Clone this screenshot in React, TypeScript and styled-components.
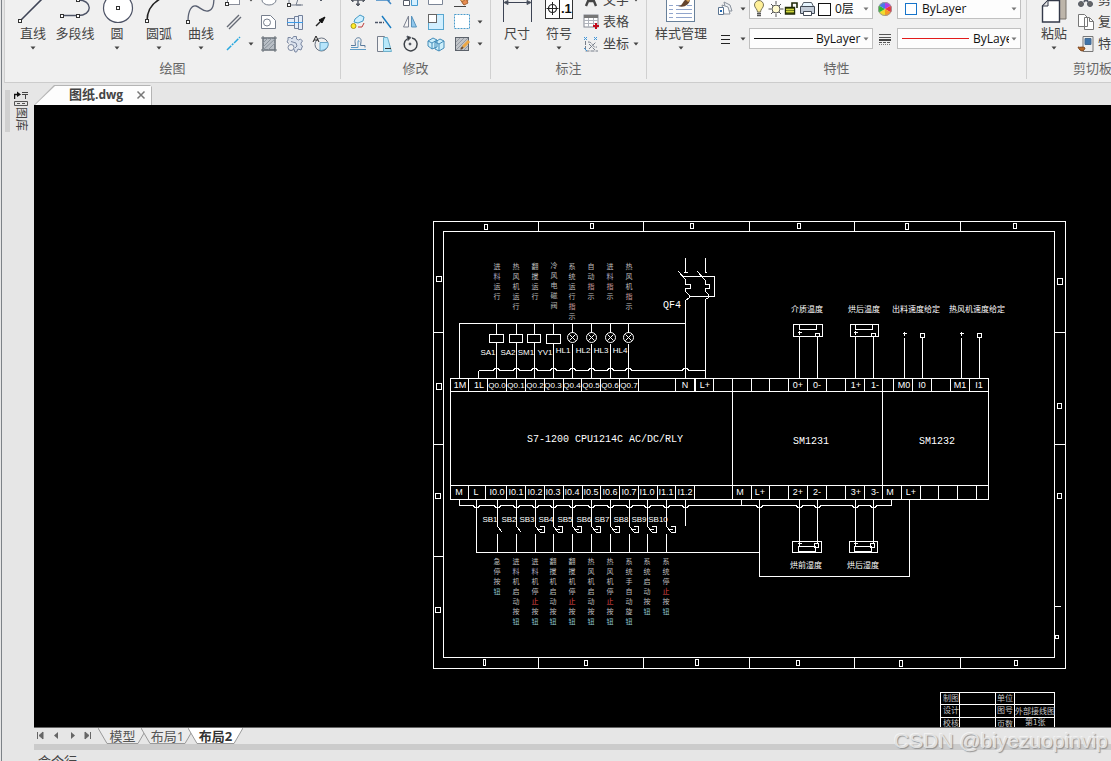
import React from "react";
import styled, { createGlobalStyle, css } from "styled-components";

const ui = `"Open Sans", "Noto Sans CJK SC", sans-serif`;

const GlobalStyle = createGlobalStyle`
  * { box-sizing: border-box; }
  body { margin: 0; background: #e6e6e6; overflow: hidden; }
  button, select { font: inherit; color: inherit; }
`;

const Window = styled.div`
  display: flex;
  flex-direction: column;
  height: 100vh;
  margin-left: 1px;
  border-left: 1px solid #7d8288;
  background: #e6e6e6;
  color: #444;
  font: 13px/16px ${ui};
  overflow: hidden;
`;

/* ---------- ribbon ---------- */

const Ribbon = styled.header`
  display: flex;
  flex: none;
  height: 83px;
  margin-left: 2px;
  background: #f0f0f0;
  border-left: 1px solid #d0d0d0;
  border-bottom: 1px solid #ccc;
  overflow: hidden;
`;

const Panel = styled.section<{ $width: number }>`
  display: flex;
  flex: none;
  flex-direction: column;
  width: ${(p) => p.$width}px;
  height: 79px;
  border-right: 1px solid #d0d0d0;
`;

const PanelBody = styled.div<{ $inset: number }>`
  display: flex;
  height: 60px;
  padding-left: ${(p) => p.$inset}px;
`;

const PanelTitle = styled.h2`
  margin: 0;
  color: #666;
  font-size: 13px;
  font-weight: 400;
  line-height: 16px;
  text-align: center;
`;

const plainButton = css`
  padding: 0;
  border: 0;
  background: none;
`;

const BigButton = styled.button<{ $width?: number }>`
  ${plainButton}
  display: flex;
  flex: none;
  flex-direction: column;
  align-items: center;
  width: ${(p) => p.$width ?? 42}px;
  white-space: nowrap;
  svg { display: block; flex: none; }
  span { height: 21px; line-height: 16px; }
`;

const ToolGrid = styled.div<{ $cols: string }>`
  display: grid;
  flex: none;
  grid-template-columns: ${(p) => p.$cols};
  grid-auto-rows: 22px;
  height: 66px;
  margin-top: -11px;
`;

const Tool = styled.button`
  ${plainButton}
  display: flex;
  align-items: center;
  justify-content: center;
  svg { display: block; flex: none; }
`;

const LabelTool = styled.button`
  ${plainButton}
  display: flex;
  align-items: center;
  gap: 1px;
  white-space: nowrap;
  svg { flex: none; }
  span { padding-bottom: 2px; }
  svg + span + svg { margin-left: 3px; }
`;

const PropertyGrid = styled.div`
  display: grid;
  grid-template-columns: 22px 13px 124px 24px 124px;
  grid-template-rows: 21px 21px;
  row-gap: 9px;
  margin: -2px 0 0 3px;
`;

const Combo = styled.label`
  display: flex;
  align-items: center;
  gap: 2px;
  padding: 0 3px 0 4px;
  border: 1px solid #c0c0c0;
  background: #fdfdfd;
  color: #111;
  font-size: 12px;
  overflow: hidden;
  svg { flex: none; }
`;

const Select = styled.select`
  flex: 1;
  min-width: 0;
  height: 16px;
  padding: 0;
  border: 0;
  background: none;
  appearance: none;
  line-height: 16px;
`;

/* ---------- workspace ---------- */

const Workspace = styled.div`
  display: flex;
  flex: 1;
  min-height: 0;
`;

const SideBar = styled.aside`
  display: flex;
  align-items: flex-start;
  gap: 4px;
  width: 32px;
  padding: 7px 0 0 3px;
`;

const Grip = styled.div`
  width: 5px;
  height: 42px;
  background: #d0d0d0;
`;

const LibraryTab = styled.button`
  ${plainButton}
  display: flex;
  flex-direction: column;
  align-items: center;
  width: 14px;
  span {
    font-size: 12px;
    line-height: 14px;
    writing-mode: vertical-rl;
    text-orientation: sideways;
  }
  svg { display: block; }
`;

const Editor = styled.main`
  display: flex;
  flex: 1;
  flex-direction: column;
  min-width: 0;
`;

const FileTabs = styled.nav`
  flex: none;
  height: 22px;
  padding-top: 2px;
`;

const FileTab = styled.div`
  display: flex;
  align-items: center;
  width: 118px;
  height: 20px;
  background: #b4b4b4;
  clip-path: polygon(0 100%, 20px 0, 116px 0, 118px 2px, 118px 100%);
  position: relative;
  &::before {
    content: "";
    position: absolute;
    inset: 1px 1px 0 1px;
    background: #fdfdfd;
    clip-path: polygon(0 100%, 20px 0, 100% 0, 100% 100%);
  }
`;

const FileName = styled.a`
  position: relative;
  width: 67px;
  margin-left: 35px;
  padding-bottom: 2px;
  color: #444;
  font-size: 13px;
  font-weight: 700;
  line-height: 18px;
  text-decoration: none;
  white-space: nowrap;
  small { font-size: 12px; }
`;

const CloseButton = styled.button`
  ${plainButton}
  position: relative;
  display: flex;
  svg { display: block; }
`;

const Canvas = styled.div`
  flex: 1;
  min-height: 0;
  background: #000;
  border-bottom: 1px solid #666;
  svg { display: block; width: 100%; height: 100%; }
`;

const LayoutBar = styled.nav`
  display: flex;
  flex: none;
  height: 16px;
`;

const NavButton = styled.button`
  ${plainButton}
  display: flex;
  align-items: center;
  width: 16px;
  svg { display: block; }
`;

const LayoutTab = styled.button<{ $width: number; $active?: boolean }>`
  ${plainButton}
  position: relative;
  flex: none;
  width: ${(p) => p.$width}px;
  height: 16px;
  margin-right: -6px;
  font-weight: ${(p) => (p.$active ? 700 : 400)};
  line-height: 12px;
  color: ${(p) => (p.$active ? "#333" : "#555")};
  z-index: ${(p) => (p.$active ? 1 : 0)};
  svg { position: absolute; inset: 0; width: 100%; height: 100%; }
  span { position: relative; }
`;

const Splitter = styled.div`
  flex: none;
  height: 6px;
  background: #cbcbcb;
`;

const CommandPane = styled.div`
  flex: none;
  height: 11px;
  padding: 2px 0 0 4px;
  line-height: 18px;
  overflow: hidden;
`;

const Watermark = styled.div`
  position: absolute;
  right: 3px;
  bottom: 8px;
  color: #e2e2e2;
  font: 21px/24px "Liberation Sans", sans-serif;
  text-shadow: 1px 1px 1px #8a8a8a, -1px -1px 0 #f4f4f4;
  opacity: 0.9;
`;

/* ---------- icons ---------- */

const Caret = ({ color = "#444" }: { color?: string }) => (
  <svg width="6" height="4" viewBox="0 0 6 4"><path d="M.5 .5h5L3 3.5z" fill={color} /></svg>
);

const Icon = ({ children, w = 22, h = 22 }: { children: React.ReactNode; w?: number; h?: number }) => (
  <svg width={w} height={h} viewBox={`0 0 ${w} ${h}`} fill="none" stroke="#555b66" strokeWidth="1">{children}</svg>
);

const node = (x: number, y: number) => (
  <rect x={x - 1.5} y={y - 1.5} width="3" height="3" fill="#fff" stroke="#333" />
);

const bigIcons = {
  line: <Icon w={42} h={25}><path d="M8 21 30-1" stroke="#3f4456" strokeWidth="1.6" />{node(8, 21)}</Icon>,
  poly: <Icon w={42} h={25}><path d="M8 15.500h16c15 0 15-15.500 0-15.500" stroke="#4d5366" strokeWidth="1.4" />{node(8, 16)}{node(24, 16)}{node(24, 0)}</Icon>,
  circle: <Icon w={42} h={25}><circle cx="22" cy="8" r="14.500" fill="#fff" stroke="#4d5366" strokeWidth="1.2" />{node(22, 8)}</Icon>,
  arc: <Icon w={42} h={25}><path d="M9 21C9 11 13 4 22-1" stroke="#222" strokeWidth="1.5" />{node(9, 21)}</Icon>,
  curve: <Icon w={42} h={25}><path d="M8 21C8 10 12 5 16 6S23 12 28 11 34 5 34-4" stroke="#596072" strokeWidth="1.3" />{node(8, 22)}</Icon>,
  dimension: <Icon w={42} h={25}><path d="M7.500 0v22M35.500 0v22M8 2.500h28" stroke="#3d4454" /><path d="M8 2.500l4-2v4zM35 2.500l-4-2v4z" fill="#3d4454" /></Icon>,
  symbol: (
    <Icon w={42} h={25}>
      <rect x="7.500" y="-8" width="27" height="26.500" fill="#fff" stroke="#333" />
      <path d="M21.500-2v20M14.500 2v13M8.500 8.500h12" stroke="#222" />
      <circle cx="14.500" cy="8.500" r="4" stroke="#222" strokeWidth="1.2" />
      <text x="23" y="13" fill="#111" stroke="none" fontSize="13" fontWeight="700" fontFamily="Liberation Sans">.1</text>
    </Icon>
  ),
  style: (
    <Icon w={42} h={25}>
      <rect x="6.500" y="-4" width="28" height="25.500" fill="#fff" stroke="#67809a" />
      <path d="M9 5.500h4M9 9.500h4M9 13.500h4M9 17.500h4M16 5.500h5M27 5.500h5M16 9.500h16M16 13.500h16M16 17.500h16" stroke="#91a5cc" />
      <path d="M18 6c4 0 4-3 7-6h5c-1 5-6 8-12 6z" fill="#65452e" stroke="none" />
      <path d="M27 1 31-3" stroke="#d7a35b" strokeWidth="3" />
    </Icon>
  ),
  paste: (
    <Icon w={42} h={25}>
      <path d="M18-4h15v23H18z" fill="#bdb5aa" stroke="#77716a" />
      <path d="M9.500 6 15 .5h11.500v21.500h-17z" fill="#fff" stroke="#343a4a" strokeWidth="1.4" />
      <path d="M9.500 6H15V0z" fill="#e5e5e5" stroke="#343a4a" />
    </Icon>
  ),
};

const drawIcons = [
  <Icon><rect x="4.500" y="7" width="12" height="8.500" fill="#fff" stroke="#8a8e9a" />{node(4, 15)}</Icon>,
  <Caret />,
  <Icon><ellipse cx="11" cy="11" rx="7" ry="5" fill="#fff" stroke="#777f8d" /></Icon>,
  <Icon><path d="M5 17V7h10l-3 9h7M5 16h12" stroke="#777f8d" />{node(5, 16)}</Icon>,
  <Icon><path d="M9 10h4l-2 2z" fill="#555" /></Icon>,
  <Icon><path d="M4 16 16 4M6 18 18 6" stroke="#666b76" strokeWidth="1.4" /></Icon>,
  <i />,
  <Icon><path d="M3.500 4.500h9l5 5v8h-14z" fill="#fff" stroke="#777f8d" /><circle cx="9" cy="11.500" r="3.500" stroke="#777f8d" /></Icon>,
  <Icon><path d="M3.500 7.500h7v7h-7zM10.500 5.500h4v12h-4zM14.500 4.500h4v14h-4z" fill="#e5edf8" stroke="#72809b" /><path d="M3 11.500h16" stroke="#3d9be8" /></Icon>,
  <Icon><path d="m6 15 5-5" stroke="#222" strokeWidth="1.500" /><path d="m9 9 6-3-3 6z" fill="#111" stroke="#111" /></Icon>,
  <Icon><path d="M4 17 17 4" stroke="#29a8df" strokeWidth="1.5" strokeDasharray="6 1 2 1" /></Icon>,
  <Caret />,
  <Icon><rect x="5" y="5" width="12" height="12" fill="#b8bec5" stroke="#697079" /><path d="M3 5h16M3 17h16M5 3v16M17 3v16" stroke="#687078" /><path d="m5 10 5-5m-5 9 9-9m-9 12L17 6m-7 11 7-7" stroke="#8b949d" /></Icon>,
  <Icon>
    <path d="M4 7V4.500h2.500L8 6l1.500-2.500h3V6l2 1 2-1 2 2-1.500 2v2l1.500 1-1.500 4-3-1-1.500 3H11" fill="#dbe2ed" stroke="#7b88a2" />
    <path d="M4 7 3 9l2 1.500M9 14l2 5M7 8.500l5 1.500 1 3-2 2" stroke="#7b88a2" />
    <circle cx="7" cy="14.500" r="3" fill="#f0f0f0" stroke="#7b88a2" />
  </Icon>,
  <Icon><circle cx="11.500" cy="11.500" r="6.500" stroke="#6b7482" /><path d="M10 9.500h8c1 5-3 8-8 8z" fill="#b7e5fb" stroke="#6ba7c8" /><path d="m3 9 3-6 3 6M4 7h4" stroke="#222" /></Icon>,
];

const modifyIcons = [
  <Icon><path d="M11 5v12M5 11h12" strokeWidth="1.5" /><path d="m9 15 2 2 2-2zM4 11l2-2v4zM18 11l-2-2v4z" fill="#555" /></Icon>,
  <Icon><path d="M3 11h14M10 6l8 9" stroke="#3e86c4" strokeWidth="1.5" /></Icon>,
  <Icon><path d="M4.500 11.500h6v5h-6z" fill="#fff" /><path d="M12.500 9.500h6v7h-6z" fill="#d6f0ff" stroke="#459bd1" /></Icon>,
  <Icon><path d="M3.500 3.500h14v12h-14z" fill="#fff" stroke="#7b8596" /></Icon>,
  <Icon><path d="m6 6 6-2 5 8-4 4z" fill="#efb262" stroke="#a8683a" /><path d="m11 13 4-3 2 4-4 2z" fill="#e98c50" stroke="#a8683a" /><path d="M3 17.500h12" stroke="#444" /></Icon>,
  <i />,
  <Icon><circle cx="6.500" cy="15" r="2.500" fill="#ffec29" stroke="#a99720" /><path d="m8 8 5-4 4 2-1 4-5 2-4-1z" fill="#cdefff" stroke="#459ac5" /><path d="M11 16h4l2-4" stroke="#bd3b39" /></Icon>,
  <Icon><path d="M2 11.500h9" stroke="#4d5668" strokeWidth="1.5" strokeDasharray="3 1" /><path d="m9 5 9 12" stroke="#187bc0" strokeWidth="1.4" /></Icon>,
  <Icon><path d="M9.500 5v11h-5z" fill="#f5f5f5" stroke="#7c8291" /><path d="M12.500 5v11h5z" fill="#92c8ec" stroke="#5793bd" /></Icon>,
  <Icon><rect x="3.500" y="3.500" width="15" height="15" fill="#d1efff" stroke="#58a6cf" /><rect x="3.500" y="3.500" width="8" height="8" fill="#fff" stroke="#666" /></Icon>,
  <Icon><rect x="3.500" y="3.500" width="15" height="14" fill="#fff" stroke="#4b9ccc" strokeDasharray="2 1" /></Icon>,
  <Caret />,
  <Icon><path d="M4 12.500h4.500L8 8.500c0-5 7-5 6 0l-.5 4H18v2" stroke="#5a7b9c" /><path d="M3 16.500h16M4 14.500h7V9c0-2 1-2 1 0" stroke="#5c9bc6" /></Icon>,
  <Icon><path d="M4.500 3.500h7v15h-7z" fill="#f5f5f5" stroke="#777f8d" /><path d="M10.500 4.500h4l4 14h-8z" fill="#b7e8fa" stroke="#6fb1cc" /><path d="M12 15.500h6" stroke="#333" /></Icon>,
  <Icon><path d="M13 5a6.500 6.500 0 1 1-5 1" stroke="#3d4248" strokeWidth="1.5" /><path d="m8 3 4 1.500-3 3z" fill="#333" /><circle cx="11" cy="11" r="1" fill="#333" /></Icon>,
  <Icon><path d="m3 8 5-3 4 2v7l-5 2-4-3zM10 9l5-3 4 2v7l-5 3-4-2z" fill="#cceefa" stroke="#438cb9" /><path d="m3 8 4 2 5-3m-5 3v6m3-7 4 2 5-3m-5 3v7" stroke="#438cb9" /></Icon>,
  <Icon><rect x="4.500" y="4.500" width="13" height="13" fill="#c0c3c7" stroke="#5c626b" /><path d="m5 9 4-4m-4 8 8-8m-8 12L17 5M9 17l8-8m-4 8 4-4" stroke="#949aa2" /><path d="m12 14 6-6" stroke="#eda744" strokeWidth="3" /><path d="m10 16 2-2" stroke="#6b4c2c" strokeWidth="2" /></Icon>,
  <Caret />,
];

const smallIcons = {
  text: <Icon><path d="m6 17 5-12 5 12M8 12h6" stroke="#444" strokeWidth="2.4" /></Icon>,
  table: <Icon><rect x="4" y="4" width="14" height="12" fill="#fff" stroke="#858993" /><path d="M4 5.500h14" stroke="#777" strokeWidth="3" /><path d="M4 9.500h14M4 12.500h14M8.500 7v9M13.500 7v9" stroke="#b0b4bc" /><path d="M16 12v6m-3-3h6" stroke="#c20c1b" strokeWidth="2" /></Icon>,
  coord: <Icon><path d="M5.500 8v10H18M8 9c6 0 3 6 9 5M9 16l7-7m-7 2 6 6" stroke="#777e8a" strokeDasharray="4 1" /><path d="m4 4 3 3m0-3L4 7m10-3 3 3m0-3-3 3M4 15l3 3" stroke="#4096da" /></Icon>,
  match: <Icon><path d="m10 4 6 3 2 6h-6z" fill="#eceff2" stroke="#8a929d" /><path d="m8 7 6 2 2 7h-6z" fill="#f9fafb" stroke="#8a929d" /><path d="M4.500 9.500h5v7h-5z" fill="#fff" stroke="#5b7491" /><path d="M6 13h2" stroke="#226ab5" strokeWidth="2" /></Icon>,
  weight: <Icon><path d="M7 7.500h9M7 11.500h9M7 15.500h9" stroke="#222" /></Icon>,
  wheel: (
    <Icon>
      <g stroke="none">
        <path d="M11 11V4a7 7 0 0 1 6 3.500z" fill="#b03bea" /><path d="M11 11l6-3.500a7 7 0 0 1 0 7z" fill="#ee2f3c" />
        <path d="m11 11 6 3.500a7 7 0 0 1-6 3.500z" fill="#f79a23" /><path d="M11 11v7a7 7 0 0 1-6-3.500z" fill="#f1dc2c" />
        <path d="m11 11-6 3.500a7 7 0 0 1 0-7z" fill="#30b830" /><path d="M11 11 5 7.500A7 7 0 0 1 11 4z" fill="#4a78e8" />
      </g>
      <circle cx="11" cy="11" r="6.500" stroke="#9b9b9b" />
    </Icon>
  ),
  linetype: <Icon><path d="M5 6.500h12M5 9.500h12" stroke="#555" /><path d="M5 14.500h12" stroke="#555" strokeDasharray="3 1" /><path d="M5 12h12" stroke="#444" strokeWidth="2" /><path d="M5 16.500h12" stroke="#777" strokeDasharray="1 1" /></Icon>,
  cut: <Icon><path d="m7 4 6 9m2-9-6 9" strokeWidth="2" /><circle cx="6" cy="15" r="2.500" fill="#666" /><circle cx="15" cy="15" r="2.500" fill="#666" /></Icon>,
  copy: <Icon><path d="M3.500 3.500h6l3 3v9h-9zM9.500 6.500h5l4 4v8h-9z" fill="#fff" stroke="#777" /><path d="M14.500 7v3.500h4" stroke="#777" /></Icon>,
  special: <Icon><path d="M8 3.500h10v15H8z" fill="#eee" stroke="#777" /><path d="M10 5.500h6v6h-6z" fill="#3f73a9" stroke="#456b91" /><path d="M3 14c2 1 5-1 7 1-1 4-5 4-7-1z" fill="#b96924" stroke="#7c451e" /></Icon>,
};

const LayerIcons = () => (
  <Icon w={79} h={20}>
    <path d="M3.500 13c0-3-3-4-3-7a4.500 4.500 0 0 1 9 0c0 3-3 4-3 7z" fill="#fff099" stroke="#777358" />
    <path d="M3 14.500h4M3 16.500h4" stroke="#555" strokeWidth="1.5" />
    <circle cx="22" cy="10" r="4" fill="#fffbd0" stroke="#555" />
    <path d="M22 2v3M22 15v3M14.500 10h3M26.500 10h3M17 5l2 2M25 13l2 2M27 5l-2 2M19 13l-2 2" stroke="#555" />
    <path d="M31.500 8.500h9V15h-9z" fill="#77851b" stroke="#202909" strokeWidth="1.4" />
    <path d="M38 9V4h5v5" stroke="#202909" strokeWidth="1.6" />
    <path d="M32 10.500h8M32 12.500h8" stroke="#d1d43e" />
    <path d="M49.500 3.500h8l2 4h-12z" fill="#e7f5ff" stroke="#565e68" />
    <path d="M46.500 7.500h14v7h-14z" fill="#c3ccd8" stroke="#424a56" />
    <path d="M49.500 12.500h8v4h-8z" fill="#fff" stroke="#424a56" />
    <rect x="64.500" y="4.500" width="12" height="12" fill="#fff" stroke="#111" />
  </Icon>
);

/* ---------- wiring diagram ---------- */

type Pt = [number, number];

const OUT_X = [496, 516, 534, 553, 572, 591, 610, 628];
const IN_X = [497, 516, 535, 553, 572, 591, 610, 629, 647, 666];
const TOP_DIVIDERS = [468, 487, 506, 525, 544, 563, 581, 600, 619, 638, 675, 694, 695, 713, 732, 751, 769, 788, 807, 826, 845, 864, 882, 893, 912, 931, 950, 969];
const BOTTOM_DIVIDERS = [468, 485, 506, 525, 544, 563, 582, 600, 619, 638, 657, 675, 694, 732, 751, 769, 788, 807, 826, 845, 864, 882, 901, 920, 938, 957, 976];

const MARKS: [number, number, number, number][] = [
  [484, 224, 3, 5], [590, 223, 3, 5], [690, 223, 3, 5], [797, 223, 3, 5], [905, 223, 3, 6], [1013, 223, 3, 5],
  [483, 659, 2, 6], [584, 660, 3, 5], [695, 659, 3, 6], [796, 660, 3, 5], [899, 660, 3, 6], [1014, 660, 3, 5],
  [436, 276, 5, 5], [436, 383, 5, 6], [435, 493, 5, 5], [435, 607, 5, 5],
  [1057, 278, 5, 6], [1057, 403, 4, 5], [1057, 493, 4, 5], [1055, 635, 3, 3],
];

const TOP_LABELS: [number, string][] = [
  [460, "1M"], [479, "1L"], [685, "N"], [705, "L+"], [798, "0+"], [817, "0-"], [856, "1+"], [875, "1-"],
  [904, "M0"], [922, "I0"], [960, "M1"], [979, "I1"],
];
const BOTTOM_LABELS: [number, string][] = [
  [459, "M"], [476, "L"], [740, "M"], [760, "L+"], [798, "2+"], [817, "2-"], [856, "3+"], [875, "3-"], [890, "M"], [911, "L+"],
];
const OUT_LABELS: [number, number, string][] = [
  [488, 355, "SA1"], [508, 355, "SA2"], [526, 355, "SM1"], [545, 355, "YV1"],
  [563, 353, "HL1"], [583, 353, "HL2"], [601, 353, "HL3"], [620, 353, "HL4"],
];
const IN_LABELS: [number, string][] = [
  [490, "SB1"], [509, "SB2"], [527, "SB3"], [546, "SB4"], [565, "SB5"], [584, "SB6"], [602, "SB7"], [621, "SB8"], [639, "SB9"], [658, "SB10"],
];
const OUT_NOTES: [number, number, string][] = [
  [496, 266, "进料运行"], [515, 266, "热风机运行"], [534, 266, "翻搅运行"], [553, 265, "冷风电磁阀"],
  [571, 266, "系统运行指示"], [590, 266, "自动指示"], [609, 266, "进料指示"], [628, 266, "热风机指示"],
];
const IN_NOTES: [number, string][] = [
  [496, "急停按钮"], [515, "进料机启动按钮"], [534, "进料机停止按钮"], [552, "翻搅机启动按钮"], [571, "翻搅机停止按钮"],
  [590, "热风机启动按钮"], [609, "热风机停止按钮"], [628, "系统手自动旋钮"], [646, "系统启动按钮"], [665, "系统停止按钮"],
];
const NOTE_TINT: Record<string, string> = { 止: "#e04a4a", 钮: "#8fc4c8", 指: "#c49a9b", 料: "#adadc6" };

const VerticalNote = ({ x, y, text }: { x: number; y: number; text: string }) => (
  <text fontSize="7" textAnchor="middle" fill="#bcbcbc" fontFamily="Noto Sans CJK SC">
    {[...text].map((ch, i) => (
      <tspan key={i} x={x} y={y + 3 + i * 10} fill={NOTE_TINT[ch]}>{ch}</tspan>
    ))}
  </text>
);

/* A horizontal bus that jumps over every crossing wire by `rise` pixels. */
const bus = (from: number, to: number, y: number, rise: number, crossings: number[]) =>
  `M${from} ${y}` + crossings.map((x) => `H${x - 3}L${x - 2} ${y + rise}H${x + 2}L${x + 3} ${y}`).join("") + `H${to}`;

const plus = ([x, y]: Pt) => `M${x - 2} ${y}h4M${x} ${y - 2}v4`;

const Schematic = () => (
  <svg viewBox="34 105 1077 622" preserveAspectRatio="xMidYMid meet" role="img" aria-label="S7-1200">
    <g transform="translate(.5 .5)" fill="none" stroke="#fff" strokeWidth="1" shapeRendering="crispEdges">
      <path d="M433 221H1065V668H433zM443 231H1054V657H443z" />
      <path d={[538, 643, 749, 854, 960].map((x) => `M${x} 221v10M${x} 657v11`).join("")} />
      <path d="M433 332h10M433 444h10M433 556h10M1054 332h11M1054 444h11M1054 606h6" />
      {MARKS.map(([x, y, w, h], i) => <rect key={i} x={x} y={y} width={w} height={h} />)}

      <path d="M450 378H988V499H450zM450 391H988M450 485H988M732 391V485M882 391V485" />
      <path d={TOP_DIVIDERS.map((x) => `M${x} 378v13`).join("") + BOTTOM_DIVIDERS.map((x) => `M${x} 485v14`).join("")} />

      <path d="M459 378V323H685M478 378V370" />
      <path d={bus(478, 705, 370, -2, [...OUT_X, 685])} />
      {OUT_X.map((x, i) => (
        <g key={x}>
          <path d={i < 4 ? `M${x} 323V334M${x} 342V378` : `M${x} 323V332M${x} 343V378`} />
          {i < 4 ? <rect x={x - 7} y="334" width={i === 0 || i === 3 ? 14 : 13} height={i === 3 ? 9 : 8} /> : (
            <g shapeRendering="auto"><circle cx={x} cy="337" r="5" /><path d={`M${x - 3} 334l6 6M${x + 3} 334l-6 6`} /></g>
          )}
        </g>
      ))}

      <path d="M685 257V272M683 272h4M705 257V272M704 272h2M678 271L685 279V284H690V288H685V291L689 295V297L685 300V378M697 271L705 280V284H709V288H705V291L708 294V297L705 299V378" />
      <path d="M682 276H714V296H689" />

      {[0, 56].map((dx) => (
        <g key={dx} transform={`translate(${dx} 0)`}>
          <path d={`M${dx ? 794 : 793} 324H822V336H${dx ? 794 : 793}zM799 324V329H816V324M815 336v-3h4v3M799 336V378M817 336V378${plus([799, 332])}`} />
          <path d={`M${dx ? 793 : 792} 541H821V552H${dx ? 793 : 792}zM798 546H815V551H798zM814 543h4v4h-4zM799 499V545M817 499V543M797 543h4`} />
        </g>
      ))}
      <path d={`${plus([904, 333])}${plus([961, 333])}M904 337V378M961 337V378M920 333h4v4h-4zM922 337V378M977 333h4v4h-4zM979 337V378`} />

      <path d={`M459 499V505M741 499V505M891 505V499${bus(459, 891, 505, 2, [476, ...IN_X, 685, 759, 799, 817, 855, 873])}`} />
      <path d="M476 499V552H759M759 499V576H909V499M685 499V525" />
      {IN_X.map((x, i) => (
        <g key={x}>
          <path d={`M${x} 499V526L${x + 5} 532M${x} 533V552`} />
          {i > 1 && <path d={`M${x + 4} 526H${x + 9}V532H${x + 4}M${x + 3} 529h3`} />}
        </g>
      ))}

      <path d="M940 728V692H1054V728M940 704H1054M940 717H1054M959 692V728M995 692V728M1014 692V728" />
    </g>

    <g fill="#fff" textAnchor="middle" fontFamily="Liberation Sans" fontSize="9">
      {TOP_LABELS.map(([x, t]) => <text key={x} x={x} y="388">{t}</text>)}
      {BOTTOM_LABELS.map(([x, t]) => <text key={x} x={x} y="495">{t}</text>)}
    </g>
    <g fill="#fff" textAnchor="middle" fontFamily="Liberation Sans" fontSize="8">
      {OUT_X.map((_, i) => <text key={i} x={497 + Math.round(i * 18.8)} y="388">{`Q0.${i}`}</text>)}
      {[0, 1, 2, 3, 4, 5, 6, 7, 8, 9, 10].map((i) => (
        <text key={i} x={497 + Math.round(i * 18.8)} y="495" fontSize="9">{i < 8 ? `I0.${i}` : `I1.${i - 8}`}</text>
      ))}
      {OUT_LABELS.map(([x, y, t]) => <text key={t} x={x} y={y}>{t}</text>)}
      {IN_LABELS.map(([x, t]) => <text key={t} x={x} y="522">{t}</text>)}
    </g>

    <g fill="#fff" fontFamily="Liberation Mono" fontSize="10">
      <text x="663" y="308">QF4</text>
      <text x="527" y="442">S7-1200 CPU1214C AC/DC/RLY</text>
      <text x="793" y="444">SM1231</text>
      <text x="919" y="444">SM1232</text>
    </g>

    <g fill="#fff" fontFamily="Noto Sans CJK SC" fontSize="8">
      <text x="791" y="312">介质温度</text>
      <text x="848" y="312">烘后温度</text>
      <text x="892" y="312">出料速度给定</text>
      <text x="949" y="312">热风机速度给定</text>
      <text x="790" y="568">烘前湿度</text>
      <text x="847" y="568">烘后湿度</text>
    </g>

    {OUT_NOTES.map(([x, y, t]) => <VerticalNote key={x} x={x + 1} y={y} text={t} />)}
    {IN_NOTES.map(([x, t]) => <VerticalNote key={x} x={x + 1} y={561} text={t} />)}

    <g fill="#c4c4c4" fontFamily="Noto Sans CJK SC" fontSize="8">
      <text x="943" y="701">制图</text><text x="943" y="713">设计</text><text x="943" y="726">校核</text>
      <text x="997" y="701">单位</text><text x="997" y="713">图号</text><text x="997" y="727">页数</text>
      <text x="1015" y="714">外部接线图</text><text x="1025" y="725">第1张</text>
    </g>
  </svg>
);

/* ---------- page ---------- */

type BigProps = { icon: React.ReactNode; label: string; width?: number; caret?: boolean };
const Big = ({ icon, label, width, caret = true }: BigProps) => (
  <BigButton type="button" $width={width}>
    {icon}<span>{label}</span>{caret && <Caret />}
  </BigButton>
);

const Tools = ({ icons }: { icons: React.ReactElement[] }) => (
  <>{icons.map((icon, i) => (icon.type === "i" ? <span key={i} /> : <Tool type="button" key={i}>{icon}</Tool>))}</>
);

const SheetTab = ({ label, width, active }: { label: string; width: number; active?: boolean }) => (
  <LayoutTab type="button" $width={width} $active={active}>
    <svg viewBox={`0 0 ${width} 16`} aria-hidden="true">
      <path d={`M0 0 9 15.500H${width - 9}L${width} 0`} fill={active ? "#fff" : "#ebebeb"} stroke="#999" />
    </svg>
    <span>{label}</span>
  </LayoutTab>
);

export default function App() {
  return (
    <>
      <GlobalStyle />
      <Window>
        <Ribbon>
          <Panel $width={336}>
            <PanelBody $inset={7}>
              <Big icon={bigIcons.line} label="直线" />
              <Big icon={bigIcons.poly} label="多段线" caret={false} />
              <Big icon={bigIcons.circle} label="圆" />
              <Big icon={bigIcons.arc} label="圆弧" />
              <Big icon={bigIcons.curve} label="曲线" />
              <ToolGrid $cols="24px 10px 26px 26px 26px"><Tools icons={drawIcons} /></ToolGrid>
            </PanelBody>
            <PanelTitle>绘图</PanelTitle>
          </Panel>

          <Panel $width={150}>
            <PanelBody $inset={4}>
              <ToolGrid $cols="repeat(5, 26px) 10px"><Tools icons={modifyIcons} /></ToolGrid>
            </PanelBody>
            <PanelTitle>修改</PanelTitle>
          </Panel>

          <Panel $width={156}>
            <PanelBody $inset={5}>
              <Big icon={bigIcons.dimension} label="尺寸" />
              <Big icon={bigIcons.symbol} label="符号" />
              <ToolGrid $cols="60px">
                <LabelTool type="button">{smallIcons.text}<span>文字</span><Caret /></LabelTool>
                <LabelTool type="button">{smallIcons.table}<span>表格</span></LabelTool>
                <LabelTool type="button">{smallIcons.coord}<span>坐标</span><Caret /></LabelTool>
              </ToolGrid>
            </PanelBody>
            <PanelTitle>标注</PanelTitle>
          </Panel>

          <Panel $width={380}>
            <PanelBody $inset={4}>
              <Big icon={bigIcons.style} label="样式管理" width={60} />
              <PropertyGrid>
                <Tool type="button">{smallIcons.match}</Tool>
                <Tool type="button"><Caret /></Tool>
                <Combo>
                  <LayerIcons />
                  <Select aria-label="图层"><option>0层</option></Select>
                  <Caret color="#777" />
                </Combo>
                <Tool type="button">{smallIcons.wheel}</Tool>
                <Combo>
                  <Icon w={18} h={14}><rect x="3.500" y="1.500" width="11" height="11" fill="#fff" stroke="#1674ca" /></Icon>
                  <Select aria-label="颜色"><option>ByLayer</option></Select>
                  <Caret color="#777" />
                </Combo>
                <Tool type="button">{smallIcons.weight}</Tool>
                <Tool type="button"><Caret /></Tool>
                <Combo>
                  <Icon w={60} h={4}><path d="M0 1.500h59" stroke="#111" /></Icon>
                  <Select aria-label="线宽"><option>ByLayer</option></Select>
                  <Caret color="#777" />
                </Combo>
                <Tool type="button">{smallIcons.linetype}</Tool>
                <Combo>
                  <Icon w={69} h={4}><path d="M0 1.500h67" stroke="#e21b1b" /></Icon>
                  <Select aria-label="线型"><option>ByLayer</option></Select>
                  <Caret color="#777" />
                </Combo>
              </PropertyGrid>
            </PanelBody>
            <PanelTitle>特性</PanelTitle>
          </Panel>

          <Panel $width={132}>
            <PanelBody $inset={6}>
              <Big icon={bigIcons.paste} label="粘贴" />
              <ToolGrid $cols="84px">
                <LabelTool type="button">{smallIcons.cut}<span>剪切</span></LabelTool>
                <LabelTool type="button">{smallIcons.copy}<span>复制</span></LabelTool>
                <LabelTool type="button">{smallIcons.special}<span>特性匹配</span></LabelTool>
              </ToolGrid>
            </PanelBody>
            <PanelTitle>剪切板</PanelTitle>
          </Panel>
        </Ribbon>

        <Workspace>
          <SideBar>
            <Grip />
            <LibraryTab type="button">
              <Icon w={14} h={17}>
                <path d="M.5 9V4.500H4" stroke="#111" strokeWidth="1.5" /><path d="m3 1.500 4 3-4 2.500z" fill="#111" stroke="none" />
                <path d="M8 2.500h6M8 4.500h6M11.500 4v5" stroke="#444" />
                <path d="M.5 11.500h13v4H.5zM3 13.500h3m2 0h3" stroke="#555" />
              </Icon>
              <span>图库</span>
            </LibraryTab>
          </SideBar>

          <Editor>
            <FileTabs>
              <FileTab>
                <FileName href="#drawing">图纸<small>.dwg</small></FileName>
                <CloseButton type="button" aria-label="关闭">
                  <Icon w={10} h={10}><path d="m1.500 1.500 7 7m0-7-7 7" stroke="#777" strokeWidth="1.5" /></Icon>
                </CloseButton>
              </FileTab>
            </FileTabs>

            <Canvas><Schematic /></Canvas>

            <LayoutBar>
              {["M3.500 4v7M9 4v7L5 7.500z", "M8 4v7L4 7.500z", "M5 4v7l4-3.500z", "M3 4v7l4-3.500zM8.500 4v7"].map((d, i) => (
                <NavButton type="button" key={d} aria-label={["首个", "上一个", "下一个", "末个"][i]}>
                  <svg width="16" height="16" viewBox="0 0 16 16"><path d={d} fill="#666" stroke={i % 3 ? "none" : "#666"} /></svg>
                </NavButton>
              ))}
              <SheetTab label="模型" width={49} />
              <SheetTab label="布局1" width={53} />
              <SheetTab label="布局2" width={55} active />
            </LayoutBar>
            <Splitter />
            <CommandPane>命令行</CommandPane>
          </Editor>
        </Workspace>
      </Window>
      <Watermark>CSDN @biyezuopinvip</Watermark>
    </>
  );
}
